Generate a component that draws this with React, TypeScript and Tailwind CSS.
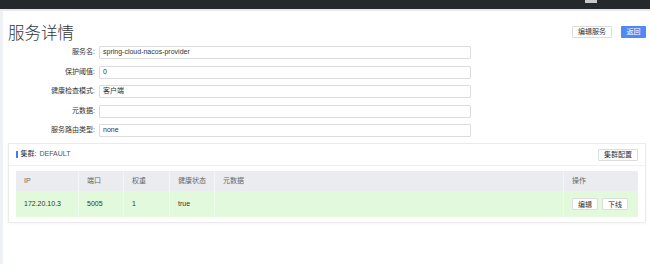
import React from "react";

const fields = [
  { label: "服务名:", value: "spring-cloud-nacos-provider" },
  { label: "保护阈值:", value: "0" },
  { label: "健康检查模式:", value: "客户端" },
  { label: "元数据:", value: "" },
  { label: "服务路由类型:", value: "none" },
];

const columns = ["IP", "端口", "权重", "健康状态", "元数据", "操作"];

const SmallButton = ({ title }: { title: string }) => (
  <button className="h-[12px] px-[5px] flex items-center border border-[#dcdcdc] bg-white text-[7px] leading-none text-[#333] rounded-[1px]">
    {title}
  </button>
);

export default function App() {
  return (
    <div className="w-[650px] h-[264px] bg-white overflow-hidden flex flex-col font-['Liberation_Sans','Noto_Sans_CJK_SC',sans-serif]">
      {/* top nav */}
      <div className="h-[9px] bg-[#25282c] flex justify-end pr-[53px]">
        <div className="w-[12px] h-[3px] bg-[#c8c8c8]" />
      </div>
      <div className="h-[2px] bg-[#e6e8eb]" />

      <div className="flex flex-1">
        <div className="w-[3px] bg-[#eef1f5]" />

        <div className="flex-1 flex flex-col">
          {/* title row */}
          <div className="flex items-start justify-between pl-[5px] pr-[4px] mt-[12px]">
            <h1 className="text-[16.5px] leading-[20px] text-[#333] font-light">服务详情</h1>
            <div className="flex items-center gap-[9px] mt-[3px]">
              <button className="h-[12px] w-[40px] flex items-center justify-center border border-[#dcdcdc] bg-white text-[7px] text-[#333] rounded-[1px]">
                编辑服务
              </button>
              <button className="h-[12px] w-[25px] flex items-center justify-center bg-[#4f89f5] text-[7px] text-white rounded-[1px]">
                返回
              </button>
            </div>
          </div>

          {/* form */}
          <div className="flex flex-col gap-[6.5px] mt-[3px]">
            {fields.map((f) => (
              <div key={f.label} className="flex items-center h-[13px]">
                <div className="w-[92px] text-right text-[7px] text-[#333]">{f.label}</div>
                <div className="ml-[4px] w-[372px] h-[13px] border border-[#dcdcdc] rounded-[1px] flex items-center px-[3px] text-[7px] text-[#333]">
                  {f.value}
                </div>
              </div>
            ))}
          </div>

          {/* cluster panel */}
          <div className="mt-[6px] ml-[5px] mr-[4px] border border-[#ebebeb] shadow-[0_1px_2px_rgba(0,0,0,0.04)] bg-white">
            <div className="h-[22px] flex items-center justify-between pl-[7px] pr-[7px] border-b border-[#f0f0f0]">
              <div className="flex items-center text-[7px] text-[#333]">
                <span className="w-[1.5px] h-[7px] bg-[#3f7ef0] mr-[3px]" />
                <span>集群:</span>
                <span className="ml-[3px] text-[#555]">DEFAULT</span>
              </div>
              <SmallButton title="集群配置" />
            </div>

            <div className="mx-[7px] my-[5px]">
              <div className="grid grid-cols-[63px_45px_46px_45px_1fr_74px] h-[20px] bg-[#ebecf0] text-[7px] text-[#666]">
                {columns.map((c, i) => (
                  <div
                    key={c}
                    className={`flex items-center pl-[8px] ${i < columns.length - 1 ? "border-r border-[#f5f5f7]" : ""}`}
                  >
                    {c}
                  </div>
                ))}
              </div>
              <div className="grid grid-cols-[63px_45px_46px_45px_1fr_74px] h-[26px] bg-[#e2f9dc] text-[7px] text-[#333]">
                <div className="flex items-center pl-[8px] border-r border-[#eefced]">172.20.10.3</div>
                <div className="flex items-center pl-[8px] border-r border-[#eefced]">5005</div>
                <div className="flex items-center pl-[8px] border-r border-[#eefced]">1</div>
                <div className="flex items-center pl-[8px] border-r border-[#eefced]">true</div>
                <div className="flex items-center pl-[8px] border-r border-[#eefced]" />
                <div className="flex items-center pl-[8px] gap-[4px]">
                  <SmallButton title="编辑" />
                  <SmallButton title="下线" />
                </div>
              </div>
            </div>
          </div>
        </div>
      </div>
    </div>
  );
}
